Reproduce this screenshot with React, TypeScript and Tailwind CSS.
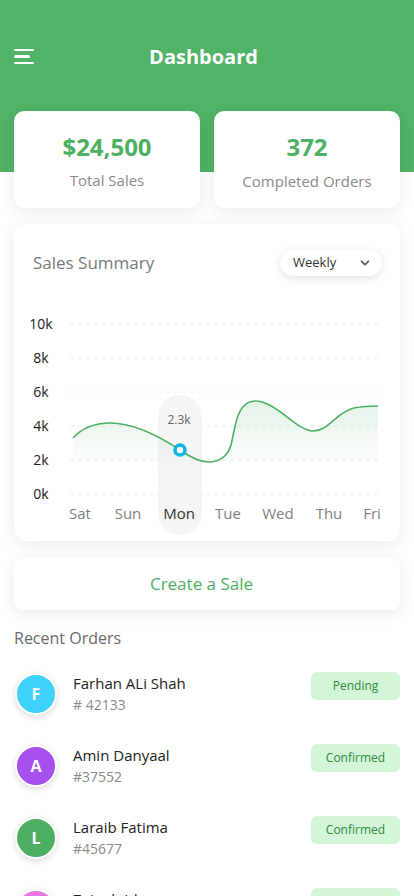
import { ChevronDown } from "lucide-react";

const orders = [
  { name: "Farhan ALi Shah", id: "# 42133", letter: "F", color: "bg-[#3ed2fa]", status: "Pending" },
  { name: "Amin Danyaal", id: "#37552", letter: "A", color: "bg-[#a650ee]", status: "Confirmed" },
  { name: "Laraib Fatima", id: "#45677", letter: "L", color: "bg-[#4caf61]", status: "Confirmed" },
  { name: "Zainab Idrees", id: "#41290", letter: "Z", color: "bg-[#e57ae6]", status: "Confirmed" },
];

const yTicks = [
  { label: "10k", y: 24 },
  { label: "8k", y: 58 },
  { label: "6k", y: 92 },
  { label: "4k", y: 126 },
  { label: "2k", y: 160 },
  { label: "0k", y: 194 },
];

const days = [
  { label: "Sat", x: 66 },
  { label: "Sun", x: 114 },
  { label: "Mon", x: 165 },
  { label: "Tue", x: 214 },
  { label: "Wed", x: 264 },
  { label: "Thu", x: 315 },
  { label: "Fri", x: 358 },
];

const curve =
  "M59,138 C70,126 84,123 96,123 C120,123 145,136 166,150 C176,157 185,162 194,162 C205,162 213,158 217,145 C221,130 222,101 241,101 C262,101 283,131 299,131 C315,131 322,112 340,108 C350,106 357,106 364,106";

function SalesChart() {
  return (
    <svg width="386" height="235" viewBox="0 0 386 235" className="block">
      <defs>
        <linearGradient id="area" x1="0" y1="0" x2="0" y2="1">
          <stop offset="0%" stopColor="#4caf61" stopOpacity="0.16" />
          <stop offset="70%" stopColor="#4caf61" stopOpacity="0" />
        </linearGradient>
      </defs>
      <rect x="144" y="95" width="44" height="140" rx="22" fill="#f5f5f5" />
      {yTicks.map((t) => (
        <g key={t.label}>
          <line x1="56" x2="364" y1={t.y} y2={t.y} stroke="#ececec" strokeDasharray="4 4" />
          <text x="27" y={t.y + 5} textAnchor="middle" fontSize="14" fill="#222">
            {t.label}
          </text>
        </g>
      ))}
      <path d={`${curve} L364,194 L59,194 Z`} fill="url(#area)" />
      <path d={curve} fill="none" stroke="#4caf61" strokeWidth="1.6" />
      <text x="165" y="124" textAnchor="middle" fontSize="12" fill="#666">
        2.3k
      </text>
      <circle cx="166" cy="150" r="5" fill="#fff" stroke="#0fb4e4" strokeWidth="3.5" />
      {days.map((d) => (
        <text
          key={d.label}
          x={d.x}
          y="219"
          textAnchor="middle"
          fontSize="15"
          fill={d.label === "Mon" ? "#333" : "#808080"}
        >
          {d.label}
        </text>
      ))}
    </svg>
  );
}

export default function App() {
  return (
    <div className="min-h-[896px] bg-white font-['Open_Sans',sans-serif] overflow-hidden">
      <div className="bg-[linear-gradient(to_bottom,#50b366_172px,#ffffff_172px)]">
        <div className="h-[111px] flex items-center px-[14px] pt-[2px]">
          <div className="flex flex-col gap-[4px]">
            <span className="block w-[20px] h-[2.5px] bg-white rounded" />
            <span className="block w-[16px] h-[2.5px] bg-white rounded" />
            <span className="block w-[20px] h-[2.5px] bg-white rounded" />
          </div>
          <h1 className="flex-1 text-center text-white font-bold text-[20px] pr-[27px]">Dashboard</h1>
        </div>
        <div className="grid grid-cols-2 gap-[14px] px-[14px]">
          <div className="h-[97px] bg-white rounded-[10px] shadow-[0_4px_16px_rgba(0,0,0,0.08)] flex flex-col items-center pt-[20px]">
            <div className="text-[24px] leading-[32px] font-bold text-[#4caf61]">$24,500</div>
            <div className="mt-[5px] text-[15px] leading-[24px] text-[#8a8a8a]">Total Sales</div>
          </div>
          <div className="h-[97px] bg-white rounded-[10px] shadow-[0_4px_16px_rgba(0,0,0,0.08)] flex flex-col items-center pt-[20px]">
            <div className="text-[24px] leading-[32px] font-bold text-[#4caf61]">372</div>
            <div className="mt-[6px] text-[15px] leading-[24px] text-[#8a8a8a]">Completed Orders</div>
          </div>
        </div>
      </div>

      <div className="px-[14px]">
        <div className="mt-[16px] bg-white rounded-[12px] shadow-[0_4px_18px_rgba(0,0,0,0.08)] pt-[26px] pb-[6px]">
          <div className="flex items-center justify-between pl-[19px] pr-[18px] h-[26px]">
            <span className="text-[17px] text-[#7a7a7a]">Sales Summary</span>
            <div className="w-[102px] h-[26px] rounded-full bg-white shadow-[0_2px_8px_rgba(0,0,0,0.12)] flex items-center justify-between pl-[13px] pr-[10px]">
              <span className="text-[13px] text-[#333]">Weekly</span>
              <ChevronDown size={14} strokeWidth={3} className="text-[#555]" />
            </div>
          </div>
          <div className="mt-[24px]">
            <SalesChart />
          </div>
        </div>

        <button className="mt-[17px] w-full h-[52px] bg-white rounded-[8px] shadow-[0_4px_16px_rgba(0,0,0,0.08)] text-[17px] text-[#4caf61] pr-[11px]">
          Create a Sale
        </button>

        <h2 className="mt-[16px] text-[16px] leading-[24px] text-[#6a6a6a]">Recent Orders</h2>

        <div className="mt-[22px]">
          {orders.map((o) => (
            <div key={o.name} className="h-[72px] flex items-start">
              <div className="mt-[1px] ml-[1px]">
                <div
                  className={`w-[42px] h-[42px] rounded-full border-2 border-white shadow-[0_2px_6px_rgba(0,0,0,0.15)] flex items-center justify-center text-white font-bold text-[16px] ${o.color}`}
                >
                  {o.letter}
                </div>
              </div>
              <div className="ml-[16px] flex-1">
                <div className="text-[15px] leading-[22px] text-[#222]">{o.name}</div>
                <div className="text-[14px] leading-[22px] text-[#8a8a8a]">{o.id}</div>
              </div>
              <div className="w-[89px] h-[28px] rounded-[6px] bg-[#d3f6d9] flex items-center justify-center text-[12px] text-[#2f8a40]">
                {o.status}
              </div>
            </div>
          ))}
        </div>
      </div>
    </div>
  );
}
